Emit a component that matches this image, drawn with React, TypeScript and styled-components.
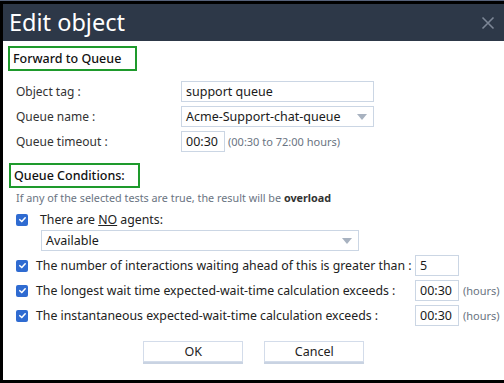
import React from "react";
import styled, { createGlobalStyle } from "styled-components";

const GlobalStyle = createGlobalStyle`
  html, body {
    margin: 0;
    padding: 0;
    background: #000;
  }
  body {
    font-family: "Noto Sans", "Open Sans", sans-serif;
    color: #222;
  }
`;

const Frame = styled.div`
  width: 504px;
  height: 383px;
  box-sizing: border-box;
  border-top: 1px solid #56627a;
  padding: 3px 4px 3px 3px;
  display: flex;
`;

const Dialog = styled.div`
  flex: 1;
  display: flex;
  flex-direction: column;
  background: #fff;
`;

const Header = styled.div`
  height: 37px;
  flex: none;
  background: #2d3848;
  display: flex;
  align-items: center;
  justify-content: space-between;
  padding: 0 10px 0 6px;
`;

const Title = styled.h1`
  margin: 0;
  font-size: 23.5px;
  font-weight: 400;
  color: #fff;
  line-height: 1;
`;

const Body = styled.div`
  padding: 5px 5px 0 5px;
  display: flex;
  flex-direction: column;
`;

const SectionBox = styled.div<{ $width: number; $indent?: number }>`
  width: ${(p) => p.$width}px;
  height: 25px;
  box-sizing: border-box;
  border: 2px solid #1e9a2c;
  margin-left: ${(p) => p.$indent ?? 0}px;
  padding-left: 3px;
  display: flex;
  align-items: center;
  font-size: 12.5px;
  font-weight: 500;
  color: #111;
`;

const FormGrid = styled.div`
  display: grid;
  grid-template-columns: 165px auto;
  row-gap: 4px;
  margin: 10px 0 0 8px;
  align-items: center;
`;

const Label = styled.div`
  font-size: 12px;
  color: #333;
`;

const Field = styled.div<{ $width: number }>`
  width: ${(p) => p.$width}px;
  height: 21px;
  box-sizing: border-box;
  border: 1px solid #cbd6e4;
  padding: 0 4px;
  display: flex;
  align-items: center;
  justify-content: space-between;
  font-size: 12.5px;
  color: #1a1a1a;
  background: #fff;
`;

const Arrow = styled.span`
  width: 0;
  height: 0;
  border-left: 5px solid transparent;
  border-right: 5px solid transparent;
  border-top: 6px solid #a8b2c0;
  margin-right: 2px;
`;

const Inline = styled.div`
  display: flex;
  align-items: center;
  gap: 3px;
`;

const Hint = styled.span<{ $pad?: number }>`
  font-size: 11px;
  color: #6a7482;
  padding-left: ${(p) => p.$pad ?? 0}px;
`;

const Note = styled.div`
  font-size: 10.8px;
  color: #6a7482;
  margin: 2px 0 0 8px;

  b {
    color: #333;
  }
`;

const Conditions = styled.div`
  display: flex;
  flex-direction: column;
  gap: 4px;
  margin: 4px 0 0 8px;
`;

const CondRow = styled.div`
  display: grid;
  grid-template-columns: 20px 379px 44px auto;
  align-items: center;
  min-height: 21px;
`;

const Check = styled.span`
  width: 12px;
  height: 12px;
  border-radius: 2px;
  background: #2f6bd1;
  display: flex;
  align-items: center;
  justify-content: center;
`;

const CondText = styled.span<{ $indent?: number }>`
  font-size: 12.3px;
  color: #222;
  white-space: nowrap;
  padding-left: ${(p) => p.$indent ?? 0}px;

  u {
    text-decoration-thickness: 1px;
  }
`;

const SubSelect = styled.div`
  margin: 0 0 0 25px;
`;

const Buttons = styled.div`
  display: flex;
  justify-content: center;
  gap: 21px;
  margin-top: 15px;
`;

const Button = styled.button`
  width: 100px;
  height: 21px;
  box-sizing: border-box;
  background: #fff;
  border: 1px solid #d3dcea;
  box-shadow: 0 2px 0 #c9d3e2;
  font-family: inherit;
  font-size: 12.5px;
  color: #222;
  padding: 0;
`;

const Tick = () => (
  <svg width="9" height="9" viewBox="0 0 10 10">
    <path d="M2 5.2 L4.2 7.3 L8 3" fill="none" stroke="#fff" strokeWidth="1.7" strokeLinecap="round" strokeLinejoin="round" />
  </svg>
);

const CloseIcon = () => (
  <svg width="14" height="14" viewBox="0 0 14 14">
    <path d="M1.5 1.5 L12.5 12.5 M12.5 1.5 L1.5 12.5" stroke="#7c8696" strokeWidth="1.6" />
  </svg>
);

const conditions = [
  { text: "The number of interactions waiting ahead of this is greater than :", value: "5", hours: false },
  { text: "The longest wait time expected-wait-time calculation exceeds :", value: "00:30", hours: true },
  { text: "The instantaneous expected-wait-time calculation exceeds :", value: "00:30", hours: true },
];

const App = () => (
  <>
    <GlobalStyle />
    <Frame>
      <Dialog>
        <Header>
          <Title>Edit object</Title>
          <CloseIcon />
        </Header>
        <Body>
          <SectionBox $width={129}>Forward to Queue</SectionBox>

          <FormGrid>
            <Label>Object tag :</Label>
            <Field $width={193}>support queue</Field>
            <Label>Queue name :</Label>
            <Field $width={193}>
              Acme-Support-chat-queue
              <Arrow />
            </Field>
            <Label>Queue timeout :</Label>
            <Inline>
              <Field $width={44}>00:30</Field>
              <Hint>(00:30 to 72:00 hours)</Hint>
            </Inline>
          </FormGrid>

          <SectionBox $width={131} $indent={1} style={{ marginTop: 11 }}>
            Queue Conditions:
          </SectionBox>
          <Note>
            If any of the selected tests are true, the result will be <b>overload</b>
          </Note>

          <Conditions>
            <div>
              <CondRow>
                <Check>
                  <Tick />
                </Check>
                <CondText $indent={4}>
                  There are <u>NO</u> agents:
                </CondText>
              </CondRow>
              <SubSelect>
                <Field $width={318}>
                  Available
                  <Arrow />
                </Field>
              </SubSelect>
            </div>
            {conditions.map((c) => (
              <CondRow key={c.text}>
                <Check>
                  <Tick />
                </Check>
                <CondText>{c.text}</CondText>
                <Field $width={44}>{c.value}</Field>
                {c.hours ? <Hint $pad={4}>(hours)</Hint> : <span />}
              </CondRow>
            ))}
          </Conditions>

          <Buttons>
            <Button>OK</Button>
            <Button>Cancel</Button>
          </Buttons>
        </Body>
      </Dialog>
    </Frame>
  </>
);

export default App;
